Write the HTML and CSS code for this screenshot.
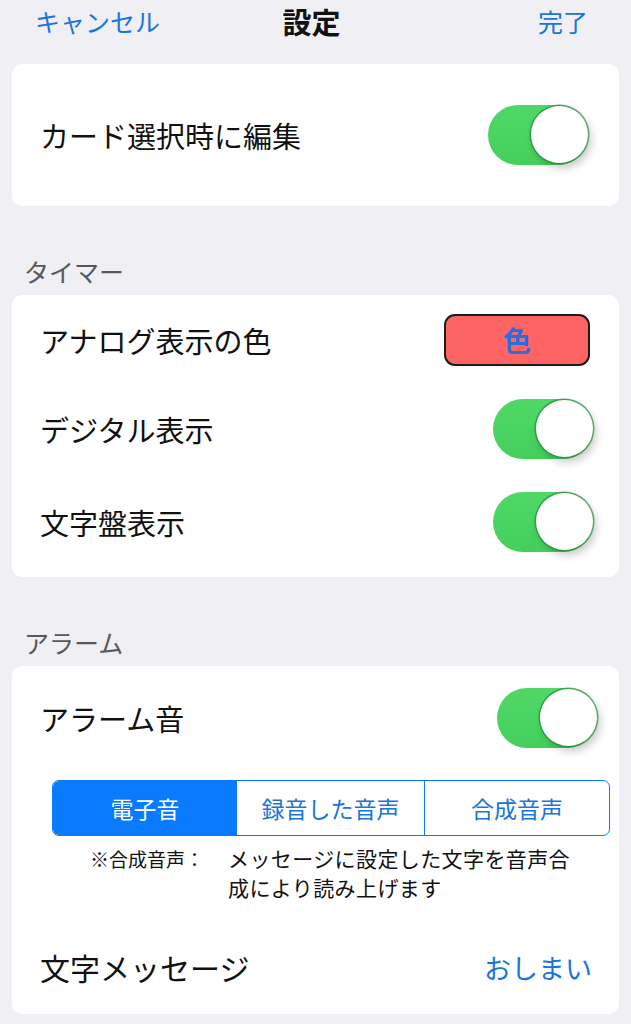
FILE: index.html
```html
<!DOCTYPE html>
<html lang="ja">
<head>
<meta charset="utf-8">
<title>設定</title>
<link rel="stylesheet" href="styles.css">
</head>
<body>
<header class="nav">
  <span class="nav-link nav-left">キャンセル</span>
  <span class="nav-title">設定</span>
  <span class="nav-link nav-right">完了</span>
</header>

<section class="card card-edit">
  <div class="row row-edit">
    <span class="label">カード選択時に編集</span>
    <span class="toggle"></span>
  </div>
</section>

<h2 class="section-title">タイマー</h2>
<section class="card card-timer">
  <div class="row row-color">
    <span class="label">アナログ表示の色</span>
    <span class="color-btn">色</span>
  </div>
  <div class="row">
    <span class="label">デジタル表示</span>
    <span class="toggle"></span>
  </div>
  <div class="row">
    <span class="label">文字盤表示</span>
    <span class="toggle"></span>
  </div>
</section>

<h2 class="section-title">アラーム</h2>
<section class="card card-alarm">
  <div class="row row-alarm">
    <span class="label">アラーム音</span>
    <span class="toggle"></span>
  </div>
  <div class="segmented">
    <span class="seg seg-active">電子音</span>
    <span class="seg seg-mid">録音した音声</span>
    <span class="seg">合成音声</span>
  </div>
  <div class="note">
    <span class="note-label">※合成音声：</span>
    <span class="note-text">メッセージに設定した文字を音声合成により読み上げます</span>
  </div>
  <div class="row row-message">
    <span class="label label-large">文字メッセージ</span>
    <span class="value-link">おしまい</span>
  </div>
</section>
</body>
</html>
```

FILE: styles.css
```css
html, body {
  margin: 0;
  padding: 0;
}
body {
  background: #efeff4;
  font-family: "Noto Sans CJK JP", "Noto Sans", sans-serif;
  color: #111;
  width: 631px;
  height: 1024px;
  overflow: hidden;
}

.nav {
  display: grid;
  grid-template-columns: 1fr auto 1fr;
  align-items: center;
  height: 42px;
  padding: 0 43px 0 35px;
  margin-bottom: 22px;
}
.nav-link {
  color: #1775dc;
  font-size: 25px;
  font-weight: 400;
  line-height: 42px;
}
.nav-left { justify-self: start; }
.nav-right { justify-self: end; }
.nav-title {
  font-size: 29px;
  font-weight: 700;
  line-height: 42px;
  color: #111;
}

.card {
  background: #fff;
  margin: 0 12px;
  border-radius: 10px;
}

.card-edit {
  height: 142px;
  display: flex;
  flex-direction: column;
  justify-content: center;
}

.row {
  display: flex;
  align-items: center;
  justify-content: space-between;
  height: 60px;
  padding: 0 26px 0 28px;
}
.row-edit { padding-right: 31px; }
.row-color { height: 52px; padding-right: 29px; }
.row-alarm { padding-right: 22px; }
.row-message { padding-right: 27px; }

.label {
  font-size: 29px;
  font-weight: 400;
  color: #111;
  line-height: 40px;
}
.label-large { font-size: 30px; }

.section-title {
  margin: 50px 0 9px 24px;
  font-size: 25px;
  font-weight: 400;
  line-height: 30px;
  color: #58585d;
}

.card-timer {
  display: flex;
  flex-direction: column;
  gap: 33px;
  padding: 19px 0 25px;
}

.toggle {
  position: relative;
  display: block;
  width: 100px;
  height: 60px;
  border-radius: 30px;
  background: linear-gradient(180deg, #4fd866 0%, #44cf5c 100%);
  flex: none;
}
.toggle::after {
  content: "";
  position: absolute;
  right: 0;
  top: 1px;
  width: 57px;
  height: 57px;
  border-radius: 50%;
  background: #fff;
  box-shadow: 0 0 0 1.5px rgba(40, 140, 60, 0.7), 3px 5px 8px rgba(0, 0, 0, 0.22);
}

.color-btn {
  display: flex;
  align-items: center;
  justify-content: center;
  width: 142px;
  height: 48px;
  background: #ff6464;
  border: 2px solid #1c1c1c;
  border-radius: 11px;
  color: #2a6de0;
  font-size: 28px;
  font-weight: 700;
  flex: none;
}

.card-alarm {
  padding: 22px 0 17px;
}

.segmented {
  display: flex;
  margin: 32px 9px 0 40px;
  height: 56px;
  border: 1.5px solid #0a7aff;
  border-radius: 7px;
  overflow: hidden;
  box-sizing: border-box;
}
.seg {
  flex: 1;
  display: flex;
  align-items: center;
  justify-content: center;
  color: #1775dc;
  font-size: 23px;
  font-weight: 400;
}
.seg-active {
  flex: 0 0 184px;
  background: #0a7aff;
  color: #fff;
}
.seg-mid {
  flex: 0 0 187px;
  border-right: 1.5px solid #0a7aff;
}

.note {
  display: flex;
  align-items: baseline;
  margin: 8px 0 0 78px;
  line-height: 29px;
}
.note-label {
  font-size: 19px;
  font-weight: 400;
  color: #111;
  margin-right: 24px;
  flex: none;
}
.note-text {
  width: 346px;
  font-size: 21px;
  letter-spacing: 0.4px;
  font-weight: 400;
  color: #111;
}

.row-message {
  margin-top: 35px;
}
.value-link {
  color: #1775dc;
  font-size: 27px;
  font-weight: 400;
}
```
